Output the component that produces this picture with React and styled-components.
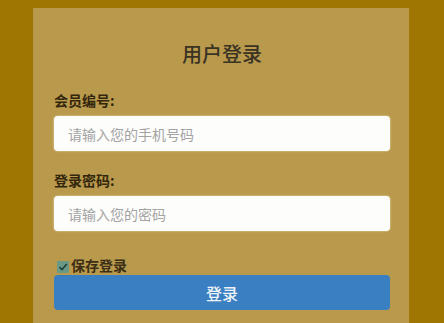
import React from "react";
import styled, { createGlobalStyle } from "styled-components";

const Global = createGlobalStyle`
  html, body { margin: 0; padding: 0; background: #9f7602; }
  body { font-family: "Noto Sans CJK SC", "Noto Sans", sans-serif; }
  * { box-sizing: border-box; }
`;

const Page = styled.div`
  width: 444px;
  height: 323px;
  overflow: hidden;
  background: #9f7602;
  padding: 8px 35px 0 33px;
`;

const Panel = styled.form`
  background: #b99a4d;
  height: 340px;
  padding: 34px 19px 0 21px;
  display: flex;
  flex-direction: column;
`;

const Title = styled.h2`
  margin: 0;
  font-size: 20px;
  line-height: 24px;
  font-weight: 500;
  color: #3a3222;
  text-align: center;
`;

const Label = styled.label`
  display: block;
  margin-top: ${(p) => p.$top}px;
  font-size: 14px;
  line-height: 16px;
  font-weight: 700;
  color: #33260c;
`;

const Input = styled.input`
  margin-top: 8px;
  height: 35px;
  width: 100%;
  border: none;
  border-radius: 4px;
  background: #fdfdfb;
  padding: 0 14px;
  font-family: inherit;
  font-size: 14px;
  color: #333;
  outline: none;
  box-shadow: 0 0 2px rgba(255, 250, 220, 0.8);
  &::placeholder { color: #a3a3a3; }
`;

const CheckRow = styled.label`
  margin-top: 26px;
  display: flex;
  align-items: center;
  gap: 2px;
  height: 16px;
  font-size: 14px;
  font-weight: 700;
  color: #3b2e14;
  padding-left: 3px;
`;

const Box = styled.span`
  width: 12px;
  height: 12px;
  margin-top: 4px;
  background: #6a9a86;
  border-radius: 1px;
  display: inline-flex;
  align-items: center;
  justify-content: center;
`;

const Button = styled.button`
  margin-top: 2px;
  height: 35px;
  width: 100%;
  border: none;
  border-radius: 4px;
  background: #3a7fc2;
  color: #eef3f8;
  font-family: inherit;
  font-size: 16px;
  font-weight: 500;
`;

export default function App() {
  return (
    <>
      <Global />
      <Page>
        <Panel onSubmit={(e) => e.preventDefault()}>
          <Title>用户登录</Title>
          <Label $top={26}>会员编号:</Label>
          <Input placeholder="请输入您的手机号码" />
          <Label $top={21}>登录密码:</Label>
          <Input type="password" placeholder="请输入您的密码" />
          <CheckRow>
            <Box>
              <svg width="10" height="10" viewBox="0 0 10 10">
                <path d="M1.5 5.2 L4 7.6 L8.8 2" fill="none" stroke="#1e3f3a" strokeWidth="1.6" />
              </svg>
            </Box>
            保存登录
          </CheckRow>
          <Button type="submit">登录</Button>
        </Panel>
      </Page>
    </>
  );
}
